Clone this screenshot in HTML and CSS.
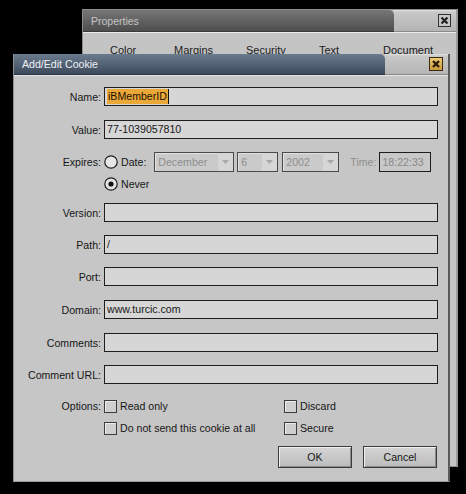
FILE: index.html
```html
<!DOCTYPE html>
<html>
<head>
<meta charset="utf-8">
<link rel="stylesheet" href="styles.css">
</head>
<body>
<div class="desktop">
  <div class="win props">
    <div class="titlebar props-title">
      <div class="title-main">Properties</div>
      <div class="title-tail">
        <svg class="close" width="13" height="13" viewBox="0 0 13 13">
          <rect x="0.5" y="0.5" width="12" height="12" fill="#c8c8c8" stroke="#303030"/>
          <path d="M3.5 3.5 L9.5 9.5 M9.5 3.5 L3.5 9.5" stroke="#202020" stroke-width="2.2"/>
        </svg>
      </div>
    </div>
    <div class="props-body">
      <div class="tabs">
        <span class="tab tab-color">Color</span>
        <span class="tab tab-margins">Margins</span>
        <span class="tab tab-security">Security</span>
        <span class="tab tab-text">Text</span>
        <span class="tab">Document</span>
      </div>
    </div>
  </div>

  <div class="win cookie">
    <div class="titlebar cookie-title">
      <div class="title-main">Add/Edit Cookie</div>
      <div class="title-tail">
        <svg class="close" width="14" height="14" viewBox="0 0 14 14">
          <defs>
            <linearGradient id="gold" x1="0" y1="0" x2="0" y2="1">
              <stop offset="0" stop-color="#f0cc78"/>
              <stop offset="1" stop-color="#c89838"/>
            </linearGradient>
          </defs>
          <rect x="0.5" y="0.5" width="13" height="13" fill="url(#gold)" stroke="#3a2a10"/>
          <path d="M4 4 L10 10 M10 4 L4 10" stroke="#2a1a08" stroke-width="2.4"/>
        </svg>
      </div>
    </div>
    <div class="cookie-body">
      <div class="row row-first">
        <label class="lbl">Name:</label>
        <div class="field"><span class="sel">iBMemberID</span><span class="caret"></span></div>
      </div>
      <div class="row row-g14">
        <label class="lbl">Value:</label>
        <div class="field">77-1039057810</div>
      </div>
      <div class="row row-g13 row-exp">
        <label class="lbl">Expires:</label>
        <div class="opt">
          <svg class="radio" width="14" height="14" viewBox="0 0 14 14"><circle cx="7" cy="7" r="6.2" fill="#e6e6e6" stroke="#1e1e1e" stroke-width="1.2"/></svg>
          <span>Date:</span>
        </div>
        <div class="combo combo-month"><span class="combo-val">December</span><span class="combo-btn"><svg width="7" height="4" viewBox="0 0 7 4"><path d="M0 0 H7 L3.5 4 Z" fill="#a8a8a8"/></svg></span></div>
        <div class="combo combo-day"><span class="combo-val">6</span><span class="combo-btn"><svg width="7" height="4" viewBox="0 0 7 4"><path d="M0 0 H7 L3.5 4 Z" fill="#a8a8a8"/></svg></span></div>
        <div class="combo combo-year"><span class="combo-val">2002</span><span class="combo-btn"><svg width="7" height="4" viewBox="0 0 7 4"><path d="M0 0 H7 L3.5 4 Z" fill="#a8a8a8"/></svg></span></div>
        <span class="time-lbl">Time:</span>
        <div class="time">18:22:33</div>
      </div>
      <div class="row row-never">
        <span class="lbl"></span>
        <div class="opt">
          <svg class="radio" width="14" height="14" viewBox="0 0 14 14"><circle cx="7" cy="7" r="6.2" fill="#e6e6e6" stroke="#1e1e1e" stroke-width="1.2"/><circle cx="7" cy="7" r="2.6" fill="#101010"/></svg>
          <span>Never</span>
        </div>
      </div>
      <div class="row row-g10">
        <label class="lbl">Version:</label>
        <div class="field"></div>
      </div>
      <div class="row row-g13">
        <label class="lbl">Path:</label>
        <div class="field">/</div>
      </div>
      <div class="row row-g13">
        <label class="lbl">Port:</label>
        <div class="field"></div>
      </div>
      <div class="row row-g14">
        <label class="lbl">Domain:</label>
        <div class="field">www.turcic.com</div>
      </div>
      <div class="row row-g14">
        <label class="lbl">Comments:</label>
        <div class="field"></div>
      </div>
      <div class="row row-g13">
        <label class="lbl">Comment URL:</label>
        <div class="field"></div>
      </div>
      <div class="row row-g14 row-check">
        <label class="lbl">Options:</label>
        <div class="check check-wide"><span class="box"></span><span>Read only</span></div>
        <div class="check"><span class="box"></span><span>Discard</span></div>
      </div>
      <div class="row row-g6 row-check">
        <span class="lbl"></span>
        <div class="check check-wide"><span class="box"></span><span>Do not send this cookie at all</span></div>
        <div class="check"><span class="box"></span><span>Secure</span></div>
      </div>
      <div class="buttons">
        <button class="btn">OK</button>
        <button class="btn">Cancel</button>
      </div>
    </div>
  </div>
</div>
</body>
</html>
```

FILE: styles.css
```css
html, body {
  margin: 0;
  padding: 0;
  background: #000;
}

body {
  font-family: "Liberation Sans", Arial, sans-serif;
  font-size: 10.6px;
  color: #161616;
}

.desktop {
  position: relative;
  width: 466px;
  height: 494px;
  overflow: hidden;
  background: #000;
}

.win {
  position: absolute;
  box-sizing: border-box;
}

.titlebar {
  display: flex;
}

.title-main {
  flex: 1;
  border-top-right-radius: 5px;
  padding-left: 8px;
  white-space: nowrap;
}

.title-tail {
  width: 62px;
  display: flex;
  align-items: center;
  justify-content: flex-end;
  padding-right: 5px;
  box-sizing: border-box;
  background: linear-gradient(#e2e2e2 0, #c8c8c8 2px, #b4b4b4 100%);
  border-bottom: 1px solid #8a8a8a;
}

.close {
  display: block;
}

/* Properties window (behind) */
.props {
  left: 82px;
  top: 9px;
  width: 376px;
  height: 458px;
  background: #c4c4c4;
  border: 1px solid #8c8c8c;
  border-right: 2px solid #9a9a9a;
}

.props-title {
  height: 22px;
}

.props-title .title-main {
  background: linear-gradient(#767676, #4e4e4e);
  color: #c6c6c6;
  line-height: 22px;
  font-size: 10.5px;
  border-bottom: 1px solid #3a3a3a;
}

.props-title .title-tail {
  width: 62px;
}

.props-body {
  border-top: 1px solid #ececec;
  padding: 11px 0 0 27px;
}

.tabs {
  display: flex;
  font-size: 11px;
  color: #1a1a1a;
}

.tab-color { width: 64px; }
.tab-margins { width: 72px; }
.tab-security { width: 73px; }
.tab-text { width: 64px; }

/* Add/Edit Cookie dialog */
.cookie {
  left: 13px;
  top: 54px;
  width: 437px;
  height: 428px;
  background: #c6c6c6;
  border-left: 1px solid #8e8e8e;
  border-right: 2px solid #5a5a5a;
  border-bottom: 1px solid #9a9a9a;
}

.cookie-title {
  height: 21px;
}

.cookie-title .title-main {
  background: linear-gradient(#6b7b8e, #3c4a5c);
  color: #eef0f4;
  line-height: 21px;
  font-size: 10.6px;
  border-bottom: 1px solid #2a3440;
}

.cookie-title .title-tail {
  width: 63px;
  padding-right: 5px;
}

.cookie-body {
  display: flex;
  flex-direction: column;
  padding: 11px 0 0 0;
  border-top: 1px solid #e4e4e4;
}

.row {
  display: flex;
  align-items: center;
}

.row-first { margin-top: 0; }
.row-g14 { margin-top: 14px; }
.row-g13 { margin-top: 13px; }
.row-g10 { margin-top: 10px; }
.row-g6 { margin-top: 6px; }
.row-never { margin-top: 3px; height: 18px; }

.lbl {
  width: 87px;
  margin-right: 3px;
  text-align: right;
  flex: none;
  white-space: nowrap;
}

.field {
  width: 334px;
  height: 19px;
  box-sizing: border-box;
  border: 1px solid #1e1e1e;
  background: #d6d6d6;
  padding: 0 2px;
  line-height: 17px;
  white-space: nowrap;
  display: flex;
  align-items: center;
}

.sel {
  background: #eaa838;
  color: #1a1000;
  line-height: 15px;
  padding: 0 1px;
}

.caret {
  width: 1px;
  height: 15px;
  background: #101010;
}

.row-exp {
  height: 20px;
}

.opt {
  display: flex;
  align-items: center;
  gap: 3px;
}

.radio {
  display: block;
}

.combo {
  height: 20px;
  box-sizing: border-box;
  border: 1px solid #4a4a4a;
  box-shadow: inset 1px 1px 0 #e2e2e2;
  background: #cacaca;
  display: flex;
  align-items: stretch;
  color: #8e8e8e;
}

.combo-val {
  flex: 1;
  padding-left: 3px;
  line-height: 18px;
  white-space: nowrap;
  overflow: hidden;
}

.combo-btn {
  width: 15px;
  background: #d6d6d6;
  display: flex;
  align-items: center;
  justify-content: center;
}

.combo-month { width: 80px; margin-left: 8px; }
.combo-day { width: 41px; margin-left: 3px; }
.combo-year { width: 57px; margin-left: 4px; }

.time-lbl {
  color: #8e8e8e;
  margin-left: 11px;
}

.time {
  width: 52px;
  height: 20px;
  box-sizing: border-box;
  margin-left: 3px;
  border: 1px solid #1e1e1e;
  background: #c8c8c8;
  color: #8a8a8a;
  line-height: 18px;
  padding-left: 2px;
}

.row-check {
  height: 16px;
}

.check {
  display: flex;
  align-items: center;
  gap: 3px;
  white-space: nowrap;
}

.check-wide {
  width: 180px;
}

.box {
  width: 13px;
  height: 13px;
  box-sizing: border-box;
  border: 1px solid #3c3c3c;
  box-shadow: inset 1px 1px 0 #ececec;
  background: #cfcfcf;
  flex: none;
}

.buttons {
  display: flex;
  justify-content: flex-end;
  gap: 11px;
  margin-top: 10px;
  padding-right: 11px;
}

.btn {
  width: 74px;
  height: 22px;
  box-sizing: border-box;
  font-family: "Liberation Sans", Arial, sans-serif;
  font-size: 10.6px;
  color: #161616;
  background: linear-gradient(#d4d4d4, #bcbcbc);
  border: 1px solid #3a3a3a;
  box-shadow: inset 1px 1px 0 #f0f0f0, inset -1px -1px 0 #8a8a8a;
  padding: 0;
}
```
